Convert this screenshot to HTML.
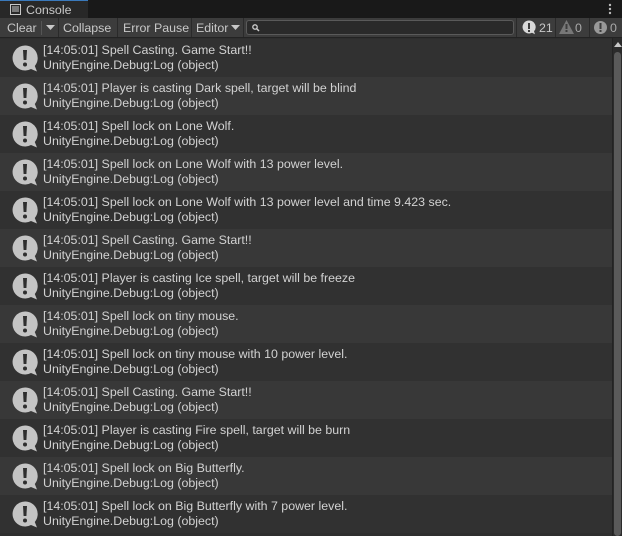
<!DOCTYPE html>
<html><head><style>
body{margin:0;width:622px;height:536px;background:#2e2e2e;font-family:"Liberation Sans",sans-serif;font-size:12.4px;color:#d2d2d2;overflow:hidden;position:relative}
.tabbar{position:absolute;left:0;top:0;width:622px;height:18px;background:#191919}
.tab{position:absolute;left:0;top:0;width:88px;height:18px;background:#282828;border-top:1px solid #3a79bb;box-sizing:border-box;color:#c8c8c8}
.tab span{position:absolute;left:26px;top:2px;font-size:12.4px}
.tb{position:absolute;left:0;top:18px;width:622px;height:20px;background:#3c3c3c;border-bottom:1px solid #232323;box-sizing:border-box}
.b{position:absolute;top:0;height:19px;line-height:20px;color:#c8c8c8;border-right:1px solid #2a2a2a;box-sizing:border-box;padding-left:6px}
.row{position:absolute;left:0;width:612px;height:38px}
.row .t{position:absolute;left:43px;top:4px;line-height:15px;white-space:nowrap}
.row svg{position:absolute;left:12px;top:6px}
</style></head><body>
<div class="tabbar"><div class="tab">
<svg style="position:absolute;left:10px;top:3px" width="11" height="11"><rect x="0.5" y="0.5" width="10" height="10" fill="none" stroke="#c8c8c8"/><path d="M2 3h7M2 5h7M2 7h7" stroke="#c8c8c8"/></svg>
<span>Console</span></div>
<svg style="position:absolute;left:608px;top:3px" width="4" height="12"><circle cx="2" cy="2" r="1.2" fill="#bbb"/><circle cx="2" cy="6" r="1.2" fill="#bbb"/><circle cx="2" cy="10" r="1.2" fill="#bbb"/></svg>
</div>
<div class="tb">
<div class="b" style="left:0;width:42px;padding-left:7px;border-right:1px solid #555;height:14px;top:3px;line-height:15px">Clear</div>
<div class="b" style="left:42px;width:17px;padding:0"><svg style="position:absolute;left:4px;top:7px" width="9" height="6"><path d="M0 0h9L4.5 5z" fill="#c8c8c8"/></svg></div>
<div class="b" style="left:59px;width:59px;padding-left:4px">Collapse</div>
<div class="b" style="left:118px;width:74px;padding-left:5px">Error Pause</div>
<div class="b" style="left:192px;width:52px;padding-left:4px">Editor<svg style="position:absolute;left:39px;top:7px" width="9" height="6"><path d="M0 0h9L4.5 5z" fill="#c8c8c8"/></svg></div>
<div style="position:absolute;left:246px;top:2px;width:268px;height:15px;background:#2a2a2a;border:1px solid #5a5a5a;border-radius:3px;box-sizing:border-box"><svg style="position:absolute;left:5px;top:3px" width="8" height="8"><circle cx="3" cy="3" r="2.2" fill="none" stroke="#ccc" stroke-width="1.3"/><path d="M4.5 4.5L7 7" stroke="#ccc" stroke-width="1.5"/></svg></div>
<div class="b" style="left:516px;width:40px;border-left:1px solid #2a2a2a;padding-left:22px">21<svg style="position:absolute;left:5px;top:2px" width="15" height="15"><path d="M7 0.5a6.5 6.5 0 1 0 3 12.3l3 1.5-1-3A6.5 6.5 0 0 0 7 0.5z" fill="#d8d8d8"/><rect x="6" y="3" width="2" height="6" fill="#3c3c3c"/><rect x="6" y="10" width="2" height="2" fill="#3c3c3c"/></svg></div>
<div class="b" style="left:556px;width:34px;padding-left:19px;color:#aaa">0<svg style="position:absolute;left:3px;top:2px" width="15" height="14"><path d="M7.5 0L15 14H0z" fill="#777"/><rect x="6.5" y="4" width="2" height="5" fill="#3c3c3c"/><rect x="6.5" y="10" width="2" height="2" fill="#3c3c3c"/></svg></div>
<div class="b" style="left:590px;width:32px;padding-left:20px;color:#aaa;border-right:0">0<svg style="position:absolute;left:3px;top:2px" width="15" height="15"><circle cx="7.5" cy="7.5" r="6.5" fill="#999"/><rect x="6.5" y="3" width="2" height="6" fill="#3c3c3c"/><rect x="6.5" y="10" width="2" height="2" fill="#3c3c3c"/></svg></div>
</div>
<div style="position:absolute;left:612px;top:38px;width:10px;height:498px;background:#2b2b2b;border-left:1px solid #232323;box-sizing:border-box"><svg style="position:absolute;left:1px;top:4px" width="8" height="5"><path d="M0 5L4 0 8 5z" fill="#c8c8c8"/></svg><div style="position:absolute;left:1px;top:14px;width:7px;height:484px;background:#5a5a5a;border-radius:4px"></div></div>
<div id="rows"></div>
<script>
var m=["Spell Casting. Game Start!!","Player is casting Dark spell, target will be blind","Spell lock on Lone Wolf.","Spell lock on Lone Wolf with 13 power level.","Spell lock on Lone Wolf with 13 power level and time 9.423 sec.","Spell Casting. Game Start!!","Player is casting Ice spell, target will be freeze","Spell lock on tiny mouse.","Spell lock on tiny mouse with 10 power level.","Spell Casting. Game Start!!","Player is casting Fire spell, target will be burn","Spell lock on Big Butterfly.","Spell lock on Big Butterfly with 7 power level."];
var h="";
m.forEach(function(s,i){h+='<div class="row" style="top:'+(39+i*38)+'px;background:'+(i%2?'#383838':'#313131')+'"><svg width="27" height="27"><path d="M13 0.5a12.5 12.5 0 1 0 6 23.5l6 2.5-2.2-5.5A12.5 12.5 0 0 0 13 0.5z" fill="#c4c4c4"/><path d="M11 5h4l-0.6 10h-2.8z" fill="#2e2e2e"/><circle cx="13" cy="19.5" r="2" fill="#2e2e2e"/></svg><div class="t">[14:05:01] '+s+'<br>UnityEngine.Debug:Log (object)</div></div>';});
document.getElementById("rows").innerHTML=h;
</script>
</body></html>
